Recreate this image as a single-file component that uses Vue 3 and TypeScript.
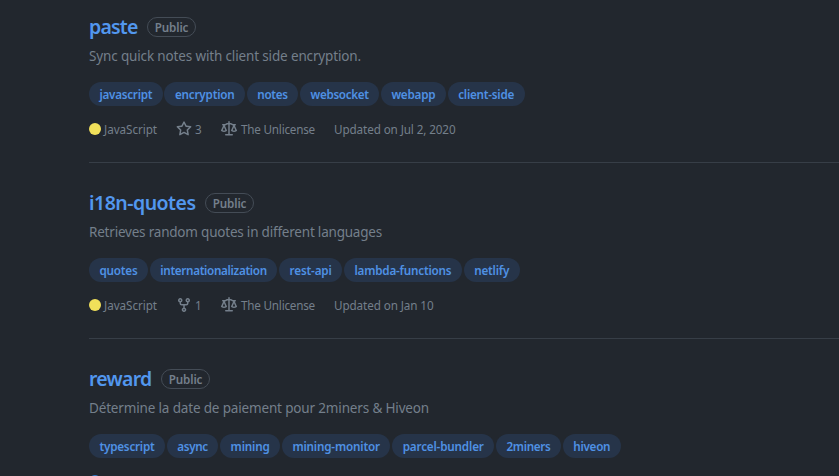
<script setup lang="ts">
interface Topic { name: string; width: number }
interface Repo {
  name: string
  nameWidth: number
  description: string
  descriptionWidth: number
  topics: Topic[]
  language?: string
  color: string
  counter?: { icon: 'star' | 'fork'; value: number }
  license?: string
  updated?: string
  updatedWidth?: number
}

const icons = {
  star: 'M8 .25a.75.75 0 01.673.418l1.882 3.815 4.21.612a.75.75 0 01.416 1.279l-3.046 2.97.719 4.192a.75.75 0 01-1.088.791L8 12.347l-3.766 1.98a.75.75 0 01-1.088-.79l.72-4.194L.818 6.374a.75.75 0 01.416-1.28l4.21-.611L7.327.668A.75.75 0 018 .25zm0 2.445L6.615 5.5a.75.75 0 01-.564.41l-3.097.45 2.24 2.184a.75.75 0 01.216.664l-.528 3.084 2.769-1.456a.75.75 0 01.698 0l2.77 1.456-.53-3.084a.75.75 0 01.216-.664l2.24-2.183-3.096-.45a.75.75 0 01-.564-.41L8 2.694v.001z',
  fork: 'M5 3.25a.75.75 0 11-1.5 0 .75.75 0 011.5 0zm0 2.122a2.25 2.25 0 10-1.5 0v.878A2.25 2.25 0 005.75 8.5h1.5v2.128a2.251 2.251 0 101.5 0V8.5h1.5a2.25 2.25 0 002.25-2.25v-.878a2.25 2.25 0 10-1.5 0v.878a.75.75 0 01-.75.75h-4.5A.75.75 0 015 6.25v-.878zm3.75 7.378a.75.75 0 11-1.5 0 .75.75 0 011.5 0zm3-8.75a.75.75 0 100-1.5.75.75 0 000 1.5z',
  law: 'M8.75.75a.75.75 0 00-1.5 0V2h-.984c-.305 0-.604.08-.869.23l-1.288.737A.25.25 0 013.984 3H1.75a.75.75 0 000 1.5h.428L.066 9.192a.75.75 0 00.154.838l.53-.53-.53.53v.001l.002.002.002.002.006.006.016.015.045.04a3.514 3.514 0 00.686.45A4.492 4.492 0 003 11c.88 0 1.556-.22 2.023-.454a3.515 3.515 0 00.686-.45l.045-.04.016-.015.006-.006.002-.002.001-.002L5.25 9.5l.53.53a.75.75 0 00.154-.838L3.822 4.5h.162c.305 0 .604-.08.869-.23l1.289-.737a.25.25 0 01.124-.033h.984V13h-2.5a.75.75 0 000 1.5h6.5a.75.75 0 000-1.5h-2.5V3.5h.984a.25.25 0 01.124.033l1.29.736c.264.152.563.231.868.231h.162l-2.112 4.692a.75.75 0 00.154.838l.53-.53-.53.53v.001l.002.002.002.002.006.006.016.015.045.04a3.517 3.517 0 00.686.45A4.492 4.492 0 0013 11c.88 0 1.556-.22 2.023-.454a3.512 3.512 0 00.686-.45l.045-.04.01-.01.006-.005.006-.006.002-.002.001-.002-.529-.531.53.53a.75.75 0 00.154-.838L13.823 4.5h.427a.75.75 0 000-1.5h-2.234a.25.25 0 01-.124-.033l-1.29-.736A1.75 1.75 0 009.735 2H8.75V.75zM1.695 9.227c.285.135.718.273 1.305.273s1.02-.138 1.305-.273L3 6.327l-1.305 2.9zm10 0c.285.135.718.273 1.305.273s1.02-.138 1.305-.273L13 6.327l-1.305 2.9z',
}

const repos: Repo[] = [
  {
    name: 'paste', nameWidth: 48.5,
    description: 'Sync quick notes with client side encryption.', descriptionWidth: 272,
    topics: [
      { name: 'javascript', width: 73.7 }, { name: 'encryption', width: 80.5 }, { name: 'notes', width: 51.5 },
      { name: 'websocket', width: 79 }, { name: 'webapp', width: 65 }, { name: 'client-side', width: 77 },
    ],
    language: 'JavaScript', color: '#f1e05a',
    counter: { icon: 'star', value: 3 }, license: 'The Unlicense',
    updated: 'Updated on Jul 2, 2020', updatedWidth: 121.5,
  },
  {
    name: 'i18n-quotes', nameWidth: 106.5,
    description: 'Retrieves random quotes in different languages', descriptionWidth: 293,
    topics: [
      { name: 'quotes', width: 59 }, { name: 'internationalization', width: 127.5 }, { name: 'rest-api', width: 63 },
      { name: 'lambda-functions', width: 118 }, { name: 'netlify', width: 56 },
    ],
    language: 'JavaScript', color: '#f1e05a',
    counter: { icon: 'fork', value: 1 }, license: 'The Unlicense',
    updated: 'Updated on Jan 10', updatedWidth: 99.5,
  },
  {
    name: 'reward', nameWidth: 62.5,
    description: 'Détermine la date de paiement pour 2miners & Hiveon', descriptionWidth: 340,
    topics: [
      { name: 'typescript', width: 76 }, { name: 'async', width: 51.5 }, { name: 'mining', width: 60 },
      { name: 'mining-monitor', width: 108.5 }, { name: 'parcel-bundler', width: 102 },
      { name: '2miners', width: 65 }, { name: 'hiveon', width: 58 },
    ],
    color: '#3178c6',
  },
]

const vFit = {
  mounted(el: HTMLElement, binding: { value: number }) {
    const natural = el.getBoundingClientRect().width
    const count = Array.from(el.textContent ?? '').length
    el.style.letterSpacing = `${(binding.value - natural) / count}px`
  },
}
</script>

<template>
  <main class="page">
    <ul class="repos">
      <li v-for="repo in repos" :key="repo.name" class="repo">
        <div class="heading">
          <h3><a v-fit="repo.nameWidth" class="name">{{ repo.name }}</a></h3>
          <span class="visibility"><span v-fit="33.5">Public</span></span>
        </div>
        <p class="description"><span v-fit="repo.descriptionWidth">{{ repo.description }}</span></p>
        <div class="topics">
          <a v-for="topic in repo.topics" :key="topic.name" class="topic" :style="{ width: topic.width + 'px' }">
            <span v-fit="topic.width - 21">{{ topic.name }}</span>
          </a>
        </div>
        <div class="meta">
          <span class="language">
            <i class="dot" :style="{ background: repo.color }"></i>
            <span v-if="repo.language" v-fit="53">{{ repo.language }}</span>
          </span>
          <span v-if="repo.counter" class="counter">
            <svg viewBox="0 0 16 16"><path :d="icons[repo.counter.icon]" /></svg>
            <span>{{ repo.counter.value }}</span>
          </span>
          <span v-if="repo.license" class="license">
            <svg viewBox="0 0 16 16"><path :d="icons.law" /></svg>
            <span v-fit="74">{{ repo.license }}</span>
          </span>
          <span v-if="repo.updated" v-fit="repo.updatedWidth ?? 0">{{ repo.updated }}</span>
        </div>
      </li>
    </ul>
  </main>
</template>

<style>
body {
  background: #22272e;
  overflow: hidden;
}
</style>

<style scoped>
.page {
  height: 476px;
  overflow: hidden;
  background: #22272e;
  color: #747f8b;
  font-family: "Noto Sans", "Open Sans", sans-serif;
}
.repos {
  list-style: none;
  margin: -13px 0 0;
  padding: 0 0 0 89px;
}
.repo {
  box-sizing: border-box;
  height: 176px;
  padding-top: 25px;
  border-bottom: 1px solid #373e47;
}
.heading {
  display: flex;
  align-items: center;
  gap: 9.5px;
  height: 30px;
}
h3 {
  margin: 0;
  font-size: 19.5px;
  line-height: 30px;
  font-weight: 600;
}
.name {
  display: inline-block;
  white-space: nowrap;
  color: #5297ee;
}
.visibility {
  box-sizing: border-box;
  display: flex;
  align-items: center;
  justify-content: center;
  width: 49px;
  height: 20px;
  padding-top: 1px;
  border: 1px solid #444c56;
  border-radius: 10px;
  font-size: 11.7px;
  line-height: 17px;
  font-weight: 600;
}
.description {
  margin: 3px 0 0;
  font-size: 13.5px;
  line-height: 22px;
  white-space: nowrap;
}
.topics {
  display: flex;
  gap: 1.8px;
  margin-top: 15px;
}
.topic {
  flex: none;
  display: flex;
  align-items: center;
  justify-content: center;
  height: 24px;
  border-radius: 12px;
  background: #263449;
  color: #4f91e4;
  font-size: 11.7px;
  line-height: 24px;
  font-weight: 600;
  white-space: nowrap;
}
.meta {
  display: flex;
  align-items: center;
  height: 18px;
  margin-top: 14px;
  font-size: 11.7px;
  line-height: 18px;
  white-space: nowrap;
}
.language,
.counter,
.license {
  display: flex;
  align-items: center;
}
.language {
  gap: 3px;
  margin-right: 19px;
}
.counter {
  gap: 3px;
  width: 45px;
}
.license {
  gap: 4px;
  margin-right: 19px;
}
.dot {
  width: 12px;
  height: 12px;
  border-radius: 50%;
}
svg {
  display: block;
  width: 16px;
  height: 16px;
  fill: currentColor;
  fill-rule: evenodd;
}
</style>
